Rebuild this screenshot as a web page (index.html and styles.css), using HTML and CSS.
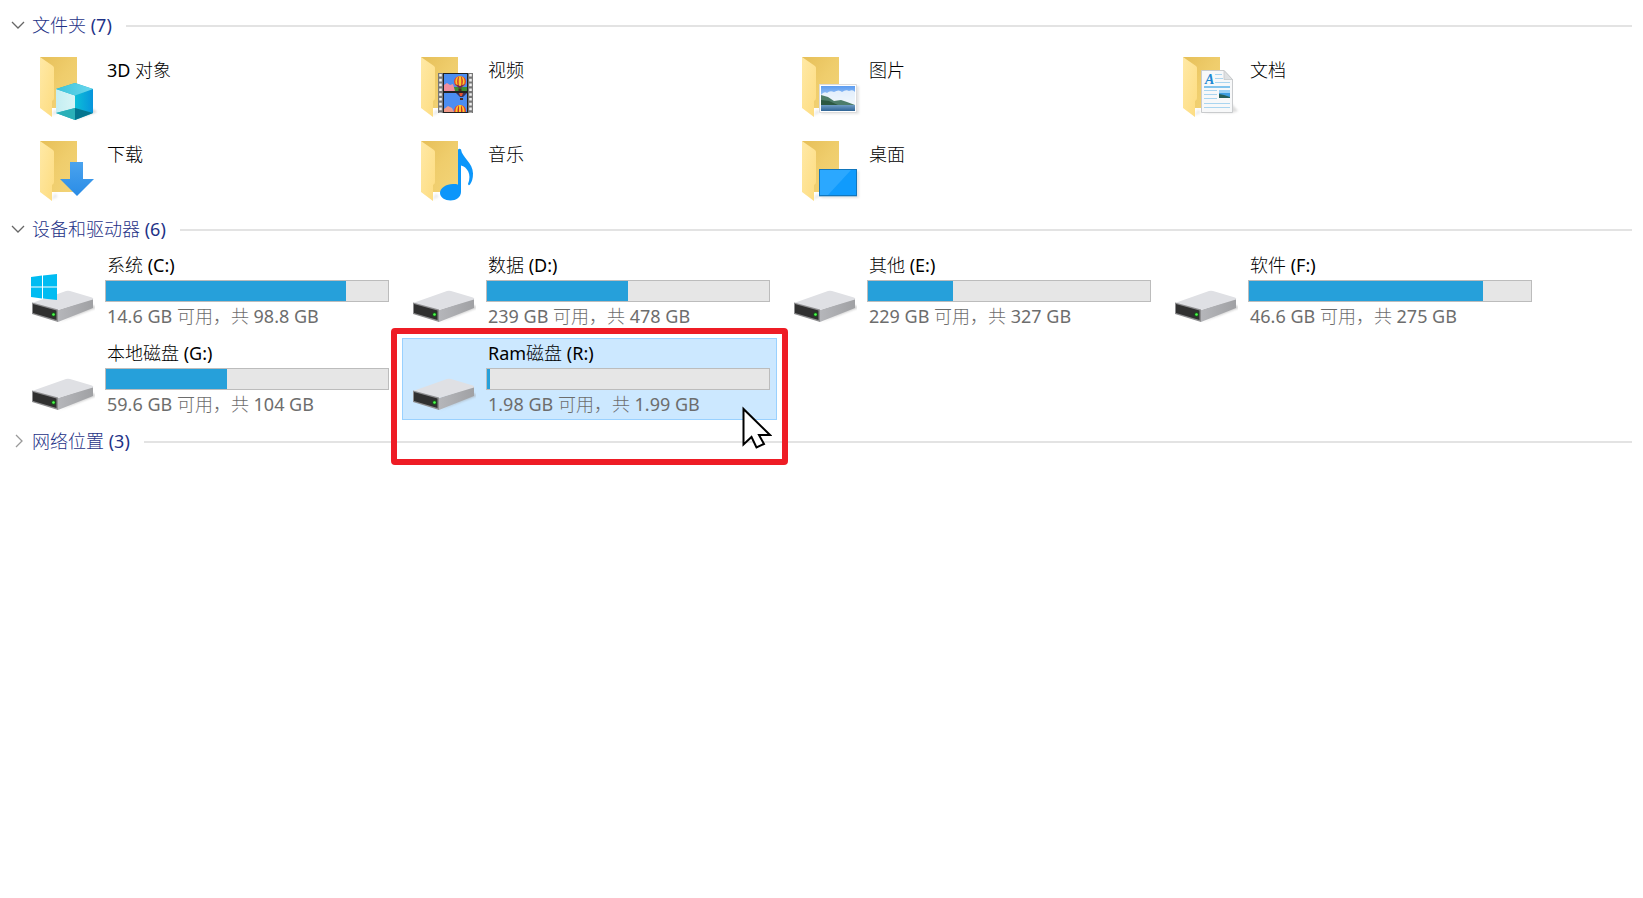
FILE: index.html
```html
<!DOCTYPE html>
<html lang="zh-CN">
<head>
<meta charset="utf-8">
<meta name="viewport" content="width=device-width, initial-scale=1">
<title>此电脑</title>
<link rel="stylesheet" href="styles.css">
</head>
<body>
<svg class="defs" aria-hidden="true">
  <defs>
    <linearGradient id="g-back" x1="0" y1="0" x2="1" y2="1"><stop offset="0" stop-color="#e6bf58"/><stop offset=".5" stop-color="#efcd6c"/><stop offset="1" stop-color="#f3d478"/></linearGradient>
    <linearGradient id="g-front" x1="0" y1="0" x2="1" y2="1"><stop offset="0" stop-color="#ffe9a6"/><stop offset="1" stop-color="#fddc80"/></linearGradient>
    <linearGradient id="g-side" x1="0" y1="0" x2="1" y2="0"><stop offset="0" stop-color="#b5b6ba"/><stop offset="1" stop-color="#a0a1a4"/></linearGradient>
    <linearGradient id="g-blue" x1="0" y1="0" x2="0" y2="1"><stop offset="0" stop-color="#4aa3ee"/><stop offset="1" stop-color="#2a8ce6"/></linearGradient>
    <linearGradient id="g-sky" x1="0" y1="0" x2="0" y2="1"><stop offset="0" stop-color="#5c9cf0"/><stop offset="1" stop-color="#d8ecfb"/></linearGradient>
    <linearGradient id="g-sea" x1="0" y1="0" x2="0" y2="1"><stop offset="0" stop-color="#6f9dc4"/><stop offset="1" stop-color="#2f6495"/></linearGradient>
    <linearGradient id="g-cube-l" x1="0" y1="0" x2="1" y2="0"><stop offset="0" stop-color="#c4eef2"/><stop offset="1" stop-color="#d8f5f6"/></linearGradient>
    <linearGradient id="g-cube-r" x1="0" y1="0" x2="1" y2="0"><stop offset="0" stop-color="#0cbfd8"/><stop offset="1" stop-color="#0794dc"/></linearGradient>
    <linearGradient id="g-cube-t" x1="0" y1="0" x2="1" y2="0"><stop offset="0" stop-color="#3cc4da"/><stop offset="1" stop-color="#6ad6ee"/></linearGradient>
    <filter id="f-soft" x="-20%" y="-20%" width="140%" height="140%"><feGaussianBlur stdDeviation="1"/></filter>
    <symbol id="folder" viewBox="0 0 64 64">
      <path d="M20 60l7-3-3-4z" fill="#bbb" opacity=".3" filter="url(#f-soft)"/>
      <path d="M9 1h37v51H20z" fill="url(#g-back)"/>
      <path d="M9 1l13 9q1 1 1 2v30q0 2-2 3v16L9 52z" fill="url(#g-front)"/>
    </symbol>
    <symbol id="drive" viewBox="0 0 64 64">
      <path d="M28 62l37-14-3-3z" fill="#999" opacity=".5" filter="url(#f-soft)"/>
      <path d="M27 50L62 38.500V48L27 62z" fill="url(#g-side)"/>
      <path d="M1 43L35 31q2-.6 4 0L61 37.500q2 1 1 2L27 50z" fill="#dfe0e4"/>
      <path d="M1 42.500L27 49.500V62L1 54z" fill="#8d8d8f"/>
      <path d="M2 44L25.500 50.500V60L2 53z" fill="#303030"/>
      <circle cx="22.500" cy="54.500" r="2.200" fill="#145c18"/>
      <circle cx="22.500" cy="54.500" r="1.300" fill="#4dff4d"/>
    </symbol>
    <symbol id="balloon" viewBox="0 0 12 15">
      <ellipse cx="6" cy="5.500" rx="6" ry="5.500" fill="#e8402c"/>
      <ellipse cx="6" cy="5.500" rx="4.600" ry="5.500" fill="#f7c92b"/>
      <ellipse cx="6" cy="5.500" rx="2.800" ry="5.500" fill="#d12b2b"/>
      <ellipse cx="6" cy="5.500" rx="1.400" ry="5.500" fill="#f7c92b"/>
      <path d="M1 8l4 4h2l4-4-5 2z" fill="#6b2a55"/>
      <path d="M4.500 12.500h3V15h-3z" fill="#4a2b1c"/>
    </symbol>
  </defs>
</svg>

<main class="explorer">
  <section class="group">
    <h2 class="group-heading"><button class="group-toggle" type="button" aria-expanded="true">
      <svg class="chevron" viewBox="0 0 14 14" aria-hidden="true"><path d="M1 4l6 6 6-6"/></svg><span>文件夹 (7)</span></button></h2>
    <div class="tiles">
      <article class="tile folder">
        <svg class="icon" viewBox="0 0 64 64" aria-hidden="true"><use href="#folder"/>
          <path d="M44 64l22-8-4-3z" fill="#aaa" opacity=".5" filter="url(#f-soft)"/>
          <path d="M44 27l18 6v24l-18 7-19-7V33z" fill="#1fb2cc"/>
          <path d="M25 33l19 6.500V52l-19 5z" fill="url(#g-cube-l)"/>
          <path d="M44 39.500L62 33v24l-18-5z" fill="url(#g-cube-r)"/>
          <path d="M44 27l18 6-18 6.500L25 33z" fill="url(#g-cube-t)"/>
          <path d="M25 57l19-5v12z" fill="#2bb0b8"/><path d="M44 52l18 5-18 7z" fill="#04758f"/>
        </svg>
        <div class="info"><h3 class="name">3D 对象</h3></div>
      </article>
      <article class="tile folder">
        <svg class="icon" viewBox="0 0 64 64" aria-hidden="true"><use href="#folder"/>
          <path d="M26 17h35v40H26z" fill="#777"/>
          <path d="M28.500 18v39M58.500 18v39" stroke="#eee" stroke-width="2.600" stroke-dasharray="2.600 2.200"/>
          <path d="M31 17h25v40H31z" fill="#222"/>
          <path d="M32 18h23v17H32zM32 37h23v19H32z" fill="#4b8df0"/>
          <path d="M32 32l10-1h13v4H32z" fill="#3c8f35"/><path d="M32 29l3-2 3 2 3-1 2 7H32z" fill="#f08fa0"/>
          <path d="M32 53l4-3 4 2 2 4H32z" fill="#f09a8a"/>
          <use href="#balloon" x="42" y="20" width="12" height="15"/>
          <path d="M44 37h11l-4 4h-3z" fill="#3b3358"/><path d="M47 37h4l-1 3h-2z" fill="#e5562b"/><path d="M48 42h3v2h-3z" fill="#4a2b1c"/>
          <path d="M42 56q0-7 6-7t6 7z" fill="#e8402c"/><path d="M43.500 56q0-7 4.500-7t4.500 7z" fill="#f7c92b"/><path d="M45.500 56q0-7 2.500-7t2.500 7z" fill="#d12b2b"/><path d="M47 56v-7h2v7z" fill="#f7c92b"/>
        </svg>
        <div class="info"><h3 class="name">视频</h3></div>
      </article>
      <article class="tile folder">
        <svg class="icon" viewBox="0 0 64 64" aria-hidden="true"><use href="#folder"/>
          <path d="M28 30h38v28H28z" fill="#aaa" opacity=".3" filter="url(#f-soft)"/>
          <path d="M26.500 28.500h37v28h-37z" fill="#fff" stroke="#dcdcdc"/>
          <path d="M28 30h34v19H28z" fill="url(#g-sky)"/>
          <path d="M28 39q3-4 6-2 3-3 7-1 5-3 8 0 4-3 7-1 4-2 6 1v13H28z" fill="#f4f9fd" opacity=".85"/>
          <path d="M28 39l7 2 6 4 7-1 6 2 8 3H28z" fill="#4d7d6a"/><path d="M28 44l8 1 9 4H28z" fill="#2d5942"/>
          <path d="M28 49h34v6H28z" fill="url(#g-sea)"/>
        </svg>
        <div class="info"><h3 class="name">图片</h3></div>
      </article>
      <article class="tile folder">
        <svg class="icon" viewBox="0 0 64 64" aria-hidden="true"><use href="#folder"/>
          <path d="M58 48l6 7-6 2H29z" fill="#aaa" opacity=".4" filter="url(#f-soft)"/>
          <path d="M27.500 14.500H50l8.500 9v33h-31z" fill="#f7f8f9" stroke="#c9cbcd"/>
          <path d="M50 14.500l8.500 9H50z" fill="#dfe1e3" stroke="#c2c4c6" stroke-width=".7"/>
          <text class="doc-letter" x="31" y="28">A</text>
          <path d="M41 18.500h7M41 22.500h8M41 26.500h15M30 34.500h13M30 38.500h13M30 42.500h13M30 47.500h26M30 51.500h26" stroke="#a9d5f0"/>
          <path d="M30 31h26" stroke="#5ab3e8" stroke-width="1.500"/>
          <path d="M45 34h11v8H45z" fill="#3d9ee2"/><path d="M45 34h11v3H45z" fill="#9bd2f6"/><path d="M45 38l5 1 6 2v1H45z" fill="#255f58"/>
        </svg>
        <div class="info"><h3 class="name">文档</h3></div>
      </article>
      <article class="tile folder">
        <svg class="icon" viewBox="0 0 64 64" aria-hidden="true"><use href="#folder"/>
          <path d="M39 22h13v17h11L46 56 29 39h10z" fill="url(#g-blue)"/>
        </svg>
        <div class="info"><h3 class="name">下载</h3></div>
      </article>
      <article class="tile folder">
        <svg class="icon" viewBox="0 0 64 64" aria-hidden="true"><use href="#folder"/>
          <path d="M46 9.500q1.500-1.500 3 0c1 8 12 13 12 24q0 7-3 11-1.500 1.500-2-.5c4-10-1-17-7-18.500V52c0 5-5 8.500-10.500 8.500S28 57.500 28 53c0-5 6-9 13-9 2 0 4 0 5 .8z" fill="#0c96fa"/>
        </svg>
        <div class="info"><h3 class="name">音乐</h3></div>
      </article>
      <article class="tile folder">
        <svg class="icon" viewBox="0 0 64 64" aria-hidden="true"><use href="#folder"/>
          <path d="M28 31h38v27H28z" fill="#aaa" opacity=".3" filter="url(#f-soft)"/>
          <path d="M26 29h38v27H26z" fill="#1176bd"/><path d="M27 30h36v25H27z" fill="#109bfd"/>
          <path d="M27 30h31L35 55h-8z" fill="#2ba8ff"/><path d="M26 56h38v1H26z" fill="#a9c7da"/>
        </svg>
        <div class="info"><h3 class="name">桌面</h3></div>
      </article>
    </div>
  </section>

  <section class="group">
    <h2 class="group-heading"><button class="group-toggle" type="button" aria-expanded="true">
      <svg class="chevron" viewBox="0 0 14 14" aria-hidden="true"><path d="M1 4l6 6 6-6"/></svg><span>设备和驱动器 (6)</span></button></h2>
    <div class="tiles">
      <article class="tile">
        <svg class="icon" viewBox="0 0 64 64" aria-hidden="true"><use href="#drive"/>
          <path d="M0 17l11-1.400v10.900H0zM12 15.500L26 14v12.500H12zM0 27.500h11v11L0 37zM12 27.500h14V40l-14-1.500z" fill="#00bcf2"/>
        </svg>
        <div class="info">
          <h3 class="name">系统 (C:)</h3>
          <div class="usage" role="meter" aria-label="系统 (C:)" aria-valuenow="85"><div class="used" style="width:85%"></div></div>
          <p class="free">14.6 GB 可用，共 98.8 GB</p>
        </div>
      </article>
      <article class="tile">
        <svg class="icon" viewBox="0 0 64 64" aria-hidden="true"><use href="#drive"/></svg>
        <div class="info">
          <h3 class="name">数据 (D:)</h3>
          <div class="usage" role="meter" aria-label="数据 (D:)" aria-valuenow="50"><div class="used" style="width:50%"></div></div>
          <p class="free">239 GB 可用，共 478 GB</p>
        </div>
      </article>
      <article class="tile">
        <svg class="icon" viewBox="0 0 64 64" aria-hidden="true"><use href="#drive"/></svg>
        <div class="info">
          <h3 class="name">其他 (E:)</h3>
          <div class="usage" role="meter" aria-label="其他 (E:)" aria-valuenow="30"><div class="used" style="width:30%"></div></div>
          <p class="free">229 GB 可用，共 327 GB</p>
        </div>
      </article>
      <article class="tile">
        <svg class="icon" viewBox="0 0 64 64" aria-hidden="true"><use href="#drive"/></svg>
        <div class="info">
          <h3 class="name">软件 (F:)</h3>
          <div class="usage" role="meter" aria-label="软件 (F:)" aria-valuenow="83"><div class="used" style="width:83%"></div></div>
          <p class="free">46.6 GB 可用，共 275 GB</p>
        </div>
      </article>
      <article class="tile">
        <svg class="icon" viewBox="0 0 64 64" aria-hidden="true"><use href="#drive"/></svg>
        <div class="info">
          <h3 class="name">本地磁盘 (G:)</h3>
          <div class="usage" role="meter" aria-label="本地磁盘 (G:)" aria-valuenow="43"><div class="used" style="width:43%"></div></div>
          <p class="free">59.6 GB 可用，共 104 GB</p>
        </div>
      </article>
      <article class="tile selected">
        <svg class="icon" viewBox="0 0 64 64" aria-hidden="true"><use href="#drive"/></svg>
        <div class="info">
          <h3 class="name">Ram磁盘 (R:)</h3>
          <div class="usage" role="meter" aria-label="Ram磁盘 (R:)" aria-valuenow="1"><div class="used" style="width:1%"></div></div>
          <p class="free">1.98 GB 可用，共 1.99 GB</p>
        </div>
        <div class="callout"></div>
        <svg class="pointer" viewBox="0 0 30 43" aria-hidden="true"><path d="M1.500 3v35.500l8-7.500 5 10.500 7.500-3.500-5-9h11z"/></svg>
      </article>
    </div>
  </section>

  <section class="group">
    <h2 class="group-heading"><button class="group-toggle" type="button" aria-expanded="false">
      <svg class="chevron collapsed" viewBox="0 0 14 14" aria-hidden="true"><path d="M5 1l6 6-6 6"/></svg><span>网络位置 (3)</span></button></h2>
  </section>
</main>
</body>
</html>
```
FILE: styles.css
```css
* {
  box-sizing: border-box;
}

body {
  margin: 0;
  background: #fff;
  color: #000;
  font: 18px/26px "Noto Sans", "Noto Sans CJK SC Light", "Noto Sans CJK SC DemiLight", "Noto Sans CJK SC", sans-serif;
}

.defs {
  position: absolute;
  width: 0;
  height: 0;
}

.explorer {
  display: flex;
  flex-direction: column;
  gap: 6px;
  padding: 10px 11px;
}

.group-heading {
  display: flex;
  align-items: center;
  gap: 14px;
  height: 32px;
  margin: 0;
  font-size: 18px;
  font-weight: 400;
}

.group-heading::after {
  content: "";
  flex: 1;
  height: 2px;
  background: #e3e3e3;
}

.group-toggle {
  display: flex;
  align-items: center;
  gap: 7px;
  padding: 0 0 2px;
  border: 0;
  background: none;
  color: #1e3287;
  font: inherit;
}

.chevron {
  width: 14px;
  height: 14px;
  fill: none;
  stroke: #666;
  stroke-width: 1.3;
}

.chevron.collapsed {
  stroke: #999;
}

.tiles {
  display: grid;
  grid-template-columns: repeat(auto-fill, 375px);
  gap: 6px;
  padding: 4px 0 0 10px;
}

.tile {
  position: relative;
  display: flex;
  gap: 10px;
  min-height: 82px;
  padding: 0 6px 0 9px;
  border: 1px solid transparent;
}

.tile.folder {
  min-height: 78px;
}

.tile.selected {
  z-index: 1;
  border-color: #99d1ff;
  background: #cce8ff;
}

.icon {
  flex: none;
  width: 64px;
  height: 64px;
  margin-top: 9px;
  overflow: visible;
}

.doc-letter {
  fill: #1e88d2;
  font: italic 700 14px "Liberation Serif", serif;
}

.info {
  flex: 1;
  min-width: 0;
  padding-top: 1px;
}

.folder .info {
  padding-top: 10px;
}

.name {
  margin: 0 2px 2px;
  font-size: 18px;
  font-weight: 400;
}

.usage {
  height: 22px;
  border: 1px solid #bcbcbc;
  background: #e6e6e6;
}

.used {
  height: 100%;
  background: #26a0da;
}

.free {
  margin: 1px 2px 0;
  color: #6d6d6d;
}

.callout {
  position: absolute;
  inset: -11px -12px -46px -12px;
  border: 6px solid #ee1c25;
  border-radius: 4px;
}

.pointer {
  position: absolute;
  top: 67px;
  right: 4px;
  width: 30px;
  height: 43px;
  fill: #fff;
  stroke: #000;
  stroke-width: 2;
}
```
